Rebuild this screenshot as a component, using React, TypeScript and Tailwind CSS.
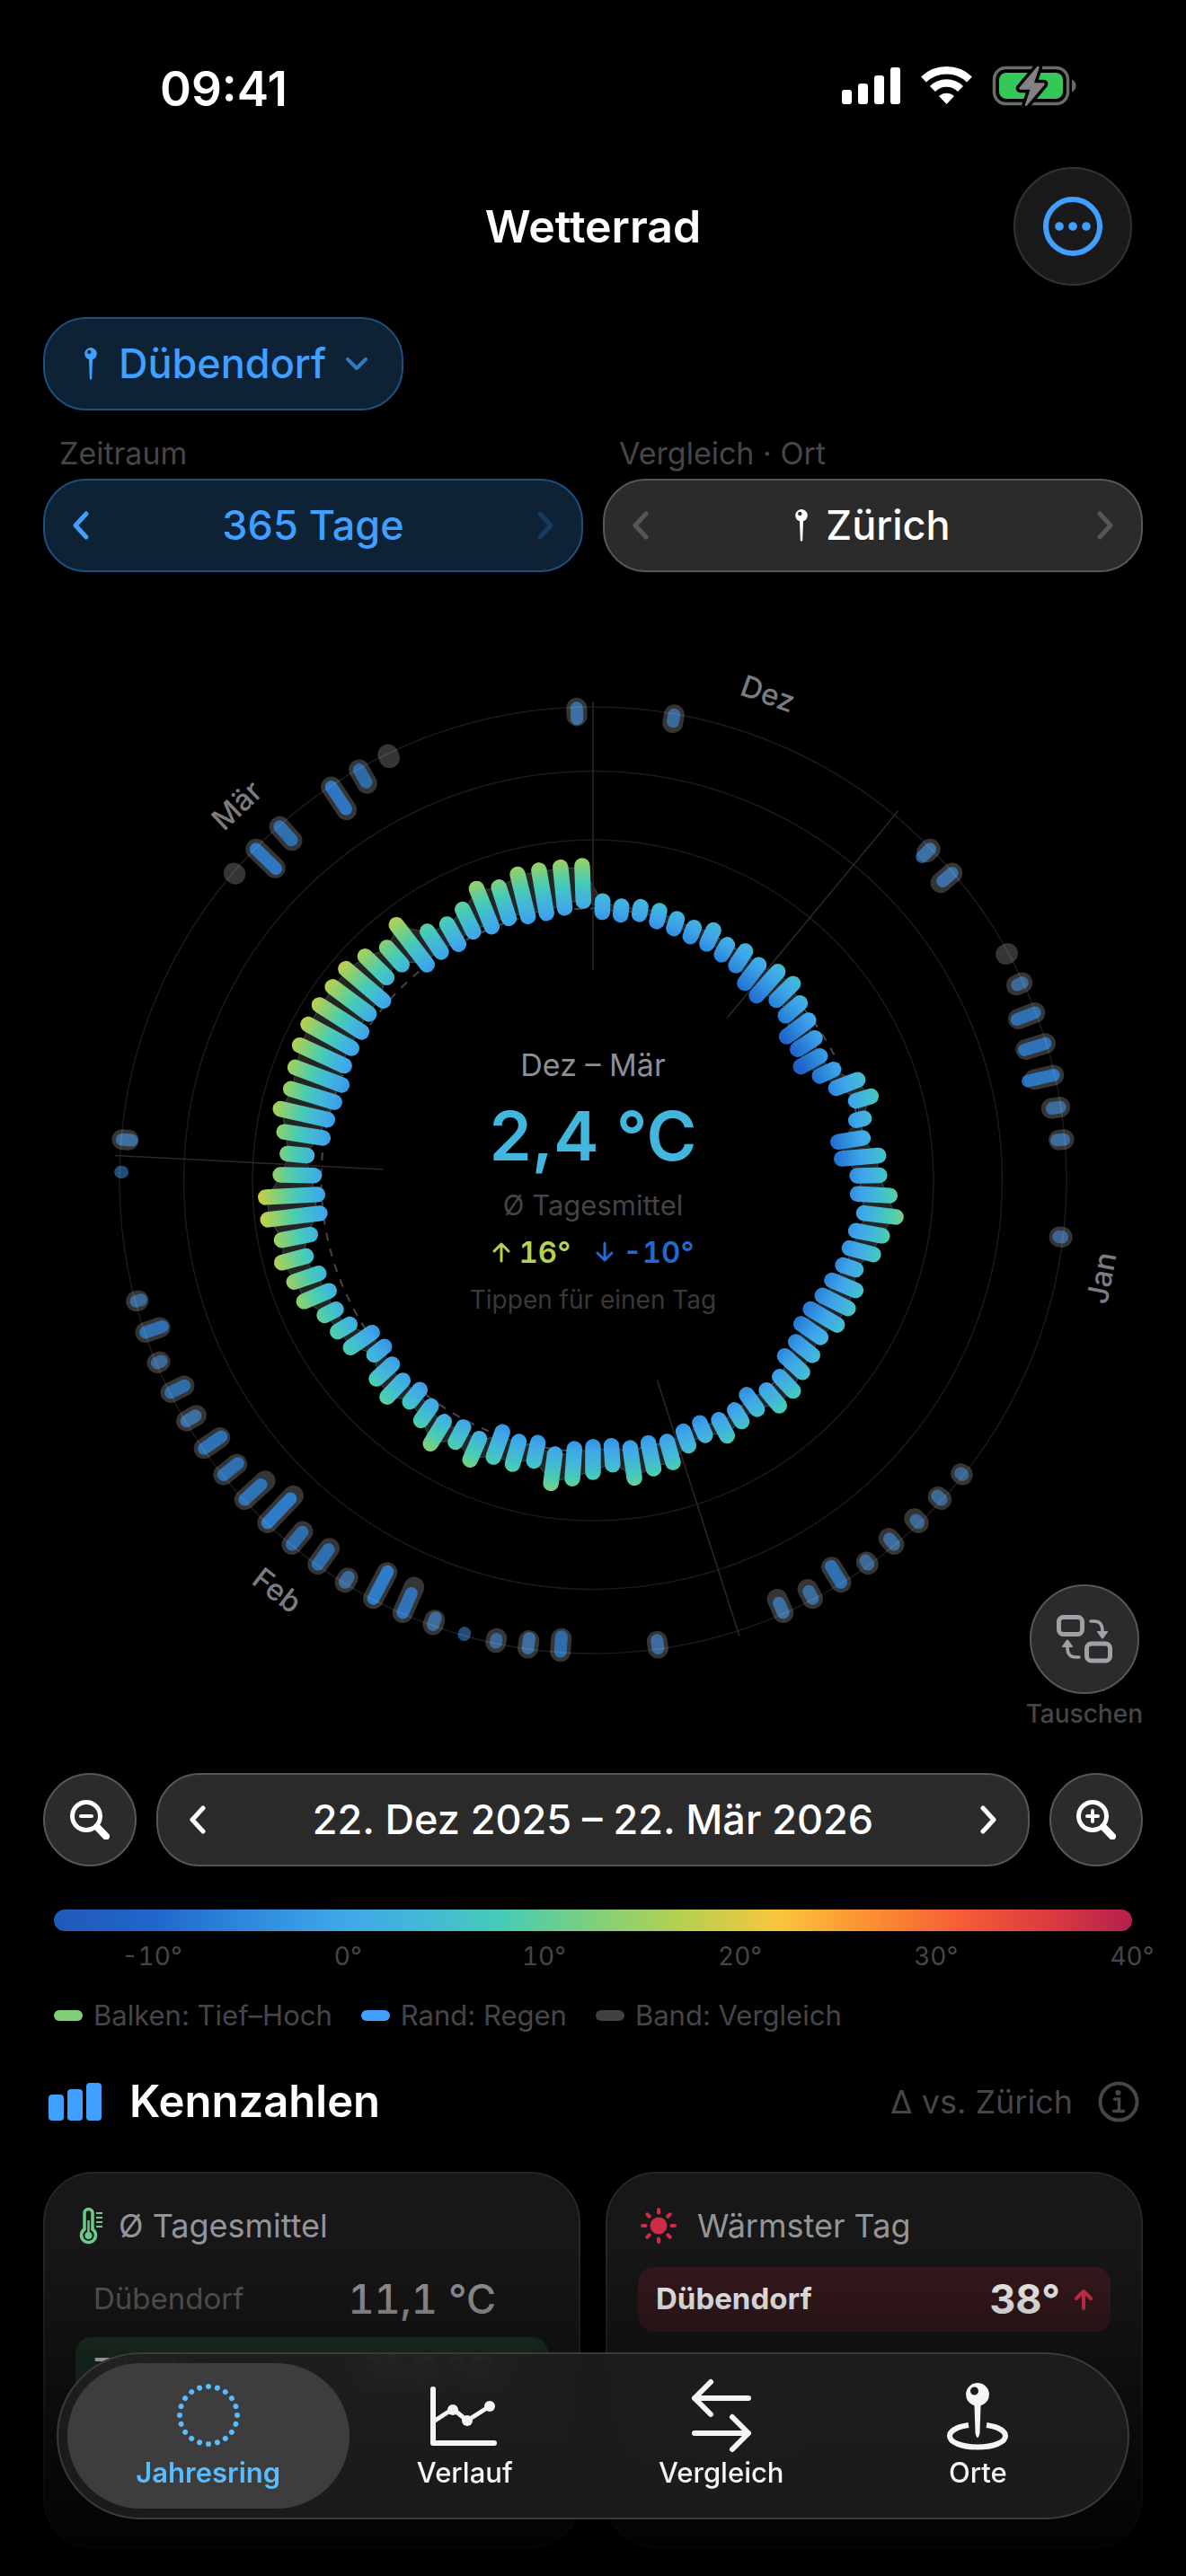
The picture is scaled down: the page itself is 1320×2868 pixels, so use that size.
import clsx from "clsx";
import type { ReactNode } from "react";

const DAYS = 91;
const ZERO_RADIUS = 302.5;
const PX_PER_DEGREE = 3.82;
const RIM = 526;

// [low, high] of every day, starting on 22 December
const TEMPS: [number, number][] = [
  [-1, 2.2], [-1.4, 1.1], [-0.5, 1.7], [-1.5, 1.7], [-2.1, 0.8], [-2.7, 0.1], [-2.7, 1.7],
  [-3.5, -0.2], [-4, 1], [-6.7, 0], [-7.3, 2], [-4.3, 2.5], [-5.4, 0.2], [-8.9, -1],
  [-8.4, -2.4], [-10.2, -3.8], [-6.5, -2.1], [-3.5, 3.3], [0.8, 5.4], [-0.6, 1.8], [-6.9, 0.4],
  [-6.5, 4.3], [-2.2, 4.3], [-2, 7.4], [0.3, 9.7], [-1.2, 6.6], [-1.9, 5.3], [-2.3, 1.7],
  [-3.7, 3.8], [-4.4, 4], [-5.5, 3.5], [-5.5, 1.4], [-3.6, 2.6], [-3.4, 3.6], [-0.2, 5.5],
  [0.2, 6], [-2.3, 2.9], [-0.5, 3.4], [-0.3, 4.9], [-1.9, 2], [-1.4, 3], [0, 6.3],
  [-0.9, 6.7], [-0.4, 8.4], [-1.6, 3.9], [-1.5, 5.9], [-0.7, 8], [1.4, 10], [-1, 4.4],
  [0, 6.8], [-1.2, 6.5], [3.1, 9.8], [2.1, 7], [3.5, 11], [1.8, 6.9], [0, 4.6],
  [1.3, 7.9], [0.2, 6.4], [-1.4, 2.4], [-1, 6.6], [3.2, 7.3], [4.6, 8.4], [4.2, 12.1],
  [5.2, 12.8], [7.3, 14.6], [4.7, 13.2], [1, 16.2], [1.2, 16.3], [2.1, 11.9], [4.5, 10.2],
  [0.5, 11.9], [0.2, 14.2], [-0.5, 12.8], [-0.9, 13.6], [0.6, 14.9], [1, 15.4], [0.9, 15.5],
  [2.1, 15.3], [1.2, 15.6], [5.1, 13.9], [4.8, 11.4], [0.1, 14.7], [0.7, 7.9], [0, 6.7],
  [1.2, 8.4], [0.4, 12.3], [1, 10.5], [0, 12.6], [-0.2, 12.5], [0.6, 12.5], [2.2, 12.5],
];

// [day, length for Zürich, length for Dübendorf], 0 means dry
const RAIN: [number, number, number][] = [
  [2, 9, 7.5], [11, 5, 12.5], [12, 16.5, 13.7], [15, 2, 0], [16, 7, 6], [17, 19.7, 21.4],
  [18, 22.7, 24.4], [19, 22, 29.6], [20, 9.5, 9], [21, 5.5, 8], [24, 3, 3.7], [32, 2, 2.6],
  [33, 4.7, 6], [34, 6.4, 4], [35, 9, 8], [36, 3.3, 5], [37, 20, 21], [38, 11.6, 9],
  [39, 16.3, 11.8], [43, 7.8, 8.8], [46, 14.5, 16.6], [47, 8.5, 11], [48, 4.6, 3.7],
  [49, 0, 2], [50, 5.6, 8.3], [51, 31, 23.6], [52, 32.8, 34], [53, 6, 7], [54, 22, 20.4],
  [55, 18.8, 18], [56, 41.6, 37], [57, 30.8, 24.6], [58, 19, 20.5], [59, 21.5, 23.3],
  [60, 12.7, 11.5], [61, 16.6, 17], [62, 3.3, 5], [63, 17, 20], [64, 2.5, 5.5], [68, 0, 2],
  [69, 7, 10.6], [78, 2, 0], [79, 30, 31], [80, 20.8, 20], [82, 30.7, 29.5], [83, 17.5, 16],
  [84, 4, 0], [90, 8.6, 12],
];

const MONTHS = [
  { name: "Dez", start: 0, middle: 5, flip: false },
  { name: "Jan", start: 10, middle: 25.5, flip: true },
  { name: "Feb", start: 41, middle: 55, flip: true },
  { name: "Mär", start: 69, middle: 80, flip: false },
];

const SCALE: [number, string][] = [
  [-15, "#2159b8"], [-10, "#1f66cc"], [-5, "#2e8adc"], [-0.5, "#3fa6ea"], [4, "#42b9d6"],
  [8, "#47ccb5"], [12.7, "#82cf7a"], [17.2, "#b8d050"], [22, "#fac53c"], [26.6, "#fc9030"],
  [31, "#f65f35"], [36, "#da3940"], [40, "#b3204f"],
];

const radius = (t: number) => ZERO_RADIUS + t * PX_PER_DEGREE;
const dayAngle = (day: number) => ((day + 0.5) / DAYS) * 360;

function polar(r: number, deg: number) {
  const a = (deg * Math.PI) / 180;
  return `${(r * Math.sin(a)).toFixed(1)},${(-r * Math.cos(a)).toFixed(1)}`;
}

function bandPath() {
  const outer = TEMPS.map(([, high], i) => polar(radius(high - 0.4), dayAngle(i)));
  const inner = TEMPS.map(([low], i) => polar(radius(low + 0.8), dayAngle(i)));
  return `M${outer.join("L")}ZM${inner.join("L")}Z`;
}

function WeatherWheel() {
  const maxRadius = radius(40);

  return (
    <svg
      viewBox="-612 -612 1224 1224"
      className="col-start-1 row-start-1 w-full h-auto overflow-visible"
      role="img"
      aria-label="Wetterrad Dez – Mär"
    >
      <defs>
        <radialGradient id="temperature" gradientUnits="userSpaceOnUse" cx="0" cy="0" r={maxRadius}>
          {SCALE.map(([t, color]) => (
            <stop key={t} offset={radius(t) / maxRadius} stopColor={color} />
          ))}
        </radialGradient>
      </defs>

      {RAIN.map(([day, other, own]) => (
        <g key={day} transform={`rotate(${dayAngle(day)})`} strokeLinecap="round">
          {other > 0 && (
            <path d={`M0 ${-RIM}v${other}`} stroke="#353535" strokeWidth="23" />
          )}
          {own > 0 && (
            <path
              d={`M0 ${-RIM}v${own}`}
              stroke={own > 15 ? "#2d8be8" : "#4397ec"}
              strokeWidth="14"
              opacity={0.48 + Math.min(own, 34) * 0.01}
            />
          )}
        </g>
      ))}

      <g fill="none" stroke="#fff" strokeOpacity="0.1" strokeWidth="1.5">
        <circle r="379" />
        <circle r="455.5" />
        <circle r="527" />
      </g>
      <circle
        r={ZERO_RADIUS}
        fill="none"
        stroke="#464646"
        strokeWidth="2"
        strokeDasharray="9 9"
      />
      <path d={bandPath()} fill="#242424" fillRule="evenodd" stroke="#484848" strokeWidth="1" />

      {MONTHS.map(({ name, start }) => (
        <path
          key={name}
          d="M0 -234V-533"
          transform={`rotate(${(start / DAYS) * 360})`}
          stroke="#2a2a2a"
          strokeWidth="1.5"
        />
      ))}

      {TEMPS.map(([low, high], i) => (
        <path
          key={i}
          d={`M0.01 ${-radius(low)}L0 ${-radius(high)}`}
          transform={`rotate(${dayAngle(i)})`}
          stroke="url(#temperature)"
          strokeWidth="17.5"
          strokeLinecap="round"
        />
      ))}

      {MONTHS.map(({ name, middle, flip }) => {
        const angle = (middle / DAYS) * 360;
        const [x, y] = polar(576, angle).split(",");
        return (
          <text
            key={name}
            transform={`translate(${x} ${y}) rotate(${flip ? angle - 180 : angle})`}
            textAnchor="middle"
            dominantBaseline="central"
            fontSize="33"
            fontWeight="500"
            fill="#7c7c80"
          >
            {name}
          </text>
        );
      })}
    </svg>
  );
}

function StatusIcons() {
  return (
    <svg viewBox="0 0 262 46" className="w-[262px] h-[46px]" aria-hidden="true">
      <g fill="#fff">
        <rect x="0" y="28" width="11" height="16" rx="3" />
        <rect x="18" y="21" width="11" height="23" rx="3" />
        <rect x="36" y="12" width="11" height="32" rx="3" />
        <rect x="54" y="3" width="11" height="41" rx="3" />
      </g>
      <g fill="none" stroke="#fff" strokeWidth="8.5">
        <path d="M91 16.5a37 37 0 0 1 51 0" />
        <path d="M101 27a22 22 0 0 1 31 0" />
      </g>
      <path d="M116.500 44l-8.500-9a12.500 12.500 0 0 1 17 0z" fill="#fff" />
      <rect x="169.500" y="3.500" width="82" height="40" rx="13" fill="none" stroke="#6b6b6b" strokeWidth="3.500" />
      <rect x="175" y="9" width="71" height="29" rx="8" fill="#34c759" />
      <path d="M256 16.500c6 2.500 6 11.500 0 14z" fill="#6b6b6b" />
      <path
        d="M217 2.500l-19.500 23c-.8 1 0 2.200 1 2.200h11l-5.500 16.500c-.6 1.800 1 2.500 2 1.300l19.500-23c.8-1 .2-2.300-1-2.300h-10.500l5.500-16.500c.5-1.800-1.500-2.500-2.500-1.200z"
        fill="#828282"
        stroke="#000"
        strokeWidth="7"
        strokeLinejoin="round"
        paintOrder="stroke"
      />
    </svg>
  );
}

function PinIcon() {
  return (
    <svg viewBox="0 0 14 36" className="w-3.5 h-9 fill-current" aria-hidden="true">
      <path
        fillRule="evenodd"
        d="M7 0a6.800 6.800 0 0 1 2 13.300L8.200 34.500Q7 37 5.800 34.500L5 13.300A6.800 6.800 0 0 1 7 0zM5.300 2.700a2.200 2.200 0 1 0 0 4.400a2.200 2.200 0 0 0 0-4.400z"
      />
    </svg>
  );
}

function Chevron({ to, className }: { to: "left" | "right" | "down"; className?: string }) {
  const paths = {
    left: "M22 5 10 18 22 31",
    right: "M14 5 26 18 14 31",
    down: "M8 13 18 23 28 13",
  };
  return (
    <svg
      viewBox="0 0 36 36"
      className={clsx("size-9 fill-none stroke-current", className)}
      strokeWidth={to === "down" ? 4 : 5}
      strokeLinecap="round"
      strokeLinejoin="round"
      aria-hidden="true"
    >
      <path d={paths[to]} />
    </svg>
  );
}

function ZoomIcon({ plus }: { plus?: boolean }) {
  return (
    <svg viewBox="0 0 44 44" className="size-11 fill-none stroke-white" strokeLinecap="round" aria-hidden="true">
      <circle cx="18" cy="18" r="15.500" strokeWidth="5" />
      <path d="M30 30 40 40.500" strokeWidth="8" />
      <path d={plus ? "M12 18h12M18 12v12" : "M12 18h12"} strokeWidth="4" />
    </svg>
  );
}

function SwapIcon() {
  return (
    <svg viewBox="0 0 62 54" className="w-[62px] h-[54px]" aria-hidden="true">
      <g fill="none" stroke="#a1a0a8" strokeLinecap="round">
        <rect x="2.500" y="2.500" width="26" height="19" rx="5" strokeWidth="5" />
        <rect x="33.500" y="32" width="26" height="19" rx="5" strokeWidth="5" />
        <path d="M38 7h4q9 0 9 11" strokeWidth="3.500" />
        <path d="M25 47h-4q-9 0-9-11" strokeWidth="3.500" />
      </g>
      <path d="M45.500 18h11q1 0 .5 1l-5 7q-1 1-2 0l-5-7q-.5-1 .5-1zM6.500 36h11q1 0 .5-1l-5-7q-1-1-2 0l-5 7q-.5 1 .5 1z" fill="#a1a0a8" />
    </svg>
  );
}

function ArrowIcon({ down, className }: { down?: boolean; className?: string }) {
  return (
    <svg
      viewBox="0 0 20 24"
      className={clsx("w-5 h-6 fill-none stroke-current", className)}
      strokeLinecap="round"
      strokeLinejoin="round"
      aria-hidden="true"
    >
      <path d={down ? "M10 2v19M2 13l8 8 8-8" : "M10 22V3M2 11l8-8 8 8"} />
    </svg>
  );
}

function Card({ icon, title, children }: { icon: ReactNode; title: string; children: ReactNode }) {
  return (
    <article className="flex-1 h-[420px] rounded-[56px] border-2 border-[#262626] bg-[#171717] px-[34px] pt-9">
      <h3 className="flex items-center h-11 text-[36px] text-[#949499]">
        {icon}
        {title}
      </h3>
      {children}
    </article>
  );
}

const TABS = [
  {
    label: "Jahresring",
    icon: (
      <g fill="currentColor">
        {Array.from({ length: 20 }, (_, i) => (
          <circle key={i} cx="40" cy="8" r="3" transform={`rotate(${i * 18} 40 40)`} />
        ))}
      </g>
    ),
  },
  {
    label: "Verlauf",
    icon: (
      <g fill="none" stroke="currentColor" strokeWidth="6" strokeLinecap="round" strokeLinejoin="round">
        <path d="M5 11v60h68" />
        <path d="M7 46l20-13 16 13 25-16" strokeWidth="5" />
        <g fill="currentColor" stroke="none">
          <circle cx="27" cy="34" r="6" />
          <circle cx="43" cy="46" r="6" />
          <circle cx="68" cy="30" r="6" />
        </g>
      </g>
    ),
  },
  {
    label: "Vergleich",
    icon: (
      <g fill="none" stroke="currentColor" strokeWidth="6" strokeLinecap="round" strokeLinejoin="round">
        <path d="M70 21H10M28 3 10 21 28 39" />
        <path d="M10 60h60M52 42l18 18-18 18" />
      </g>
    ),
  },
  {
    label: "Orte",
    icon: (
      <g>
        <path
          d="M30 51C16 53 9 58 9 63c0 7 13 12.500 31 12.500S71 70 71 63c0-5-7-10-21-12"
          fill="none"
          stroke="currentColor"
          strokeWidth="6"
        />
        <path
          fill="currentColor"
          fillRule="evenodd"
          d="M40 4a13 13 0 0 1 3.500 25.500L42.500 60Q40 70 37.500 60L36.500 29.500A13 13 0 0 1 40 4zM36.500 8.500a4.500 4.500 0 1 0 0 9a4.500 4.500 0 0 0 0-9z"
        />
      </g>
    ),
  },
];

export default function App() {
  const gradient = SCALE.map(([t, color]) => `${color} ${((t + 15) / 55) * 100}%`).join(", ");

  return (
    <main className="relative min-h-screen overflow-hidden bg-black text-white font-['Inter','Liberation_Sans',sans-serif]">
      <div className="flex items-center justify-between h-[186px] pl-[178px] pr-[121px] pt-1">
        <span className="text-[53px] leading-none font-semibold mt-2">09:41</span>
        <StatusIcons />
      </div>

      <header className="grid grid-cols-[1fr_auto_1fr] items-center px-15">
        <h1 className="col-start-2 text-[50px] font-semibold">Wetterrad</h1>
        <button
          aria-label="Mehr"
          className="justify-self-end grid place-items-center size-33 rounded-full bg-[#1a1a1a] border-2 border-[#333]"
        >
          <svg viewBox="0 0 66 66" className="size-[66px] fill-[#409fff]" aria-hidden="true">
            <circle cx="33" cy="33" r="30" fill="none" stroke="#409fff" strokeWidth="6" />
            <circle cx="18" cy="33" r="4.800" />
            <circle cx="33" cy="33" r="4.800" />
            <circle cx="48" cy="33" r="4.800" />
          </svg>
        </button>
      </header>

      <section className="px-12 pt-[35px]">
        <button className="flex items-center h-26 rounded-[48px] border-2 border-[#1d4f7f] bg-[#0d2235] pl-11 pr-8 text-[#409fff] text-[45px] font-medium">
          <PinIcon />
          <span className="ml-6">Dübendorf</span>
          <Chevron to="down" className="ml-4 opacity-70" />
        </button>

        <div className="grid grid-cols-2 gap-x-[22px] mt-7 text-[34px] leading-10 text-[#464649]">
          <span className="pl-[18px]">Zeitraum</span>
          <span className="pl-[18px]">Vergleich · Ort</span>
        </div>
        <div className="grid grid-cols-2 gap-[22px] mt-2 text-[45px] font-medium">
          <div className="flex items-center justify-between h-26 px-6 rounded-[48px] border-2 border-[#1d4f7f] bg-[#0d2235] text-[#409fff]">
            <button aria-label="Kürzer">
              <Chevron to="left" />
            </button>
            <span>365 Tage</span>
            <button aria-label="Länger" disabled className="opacity-20">
              <Chevron to="right" />
            </button>
          </div>
          <div className="flex items-center justify-between h-26 px-6 rounded-[48px] border-2 border-[#575757] bg-[#2b2b2b]">
            <button aria-label="Voriger Ort" className="opacity-20">
              <Chevron to="left" />
            </button>
            <span className="flex items-center gap-5">
              <PinIcon />
              Zürich
            </span>
            <button aria-label="Nächster Ort" className="opacity-20">
              <Chevron to="right" />
            </button>
          </div>
        </div>
      </section>

      <section className="relative grid place-items-center px-12 pt-[65px]">
        <WeatherWheel />
        <div className="col-start-1 row-start-1 flex flex-col items-center pt-1.5 text-center">
          <p className="text-[34px] leading-[44px] text-[#8e8e93]">Dez – Mär</p>
          <p className="text-[76px] leading-[112px] font-semibold text-[#42b6dc]">2,4 °C</p>
          <p className="text-[31px] leading-[44px] text-[#444446]">Ø Tagesmittel</p>
          <p className="flex items-center gap-7 text-[33px] leading-[60px] font-semibold tabular-nums">
            <span className="flex items-center gap-2.5 text-[#b8d050]">
              <ArrowIcon className="stroke-3" />
              16°
            </span>
            <span className="flex items-center gap-2.5 text-[#2469cf]">
              <ArrowIcon down className="stroke-3" />
              -10°
            </span>
          </p>
          <p className="text-[28px] leading-[46px] text-[#39393b]">Tippen für einen Tag</p>
        </div>
        <div className="absolute right-12 bottom-0 flex flex-col items-center">
          <button
            id="swap"
            aria-label="Tauschen"
            className="grid place-items-center size-[122px] rounded-full border-2 border-[#575757] bg-[#2b2b2b]"
          >
            <SwapIcon />
          </button>
          <label htmlFor="swap" className="mt-1 text-[28px] leading-9 font-medium text-[#464649]">
            Tauschen
          </label>
        </div>
      </section>

      <section className="px-12 pt-12">
        <div className="flex gap-[22px]">
          <button aria-label="Verkleinern" className="grid place-items-center size-26 rounded-full border-2 border-[#575757] bg-[#2b2b2b]">
            <ZoomIcon />
          </button>
          <div className="flex flex-1 items-center justify-between px-7 rounded-[48px] border-2 border-[#575757] bg-[#2b2b2b] text-[45px] font-medium">
            <button aria-label="Früher">
              <Chevron to="left" />
            </button>
            <span>22. Dez 2025 – 22. Mär 2026</span>
            <button aria-label="Später">
              <Chevron to="right" />
            </button>
          </div>
          <button aria-label="Vergrössern" className="grid place-items-center size-26 rounded-full border-2 border-[#575757] bg-[#2b2b2b]">
            <ZoomIcon plus />
          </button>
        </div>

        <div className="px-3 mt-12">
          <div className="h-6 rounded-xl" style={{ background: `linear-gradient(to right, ${gradient})` }} />
          <div className="grid grid-cols-6 -mr-[109px] mt-2.5 text-center text-[28px] leading-9 text-[#464649] tabular-nums">
            {["-10°", "0°", "10°", "20°", "30°", "40°"].map((label) => (
              <span key={label}>{label}</span>
            ))}
          </div>
          <ul className="flex gap-8 mt-7 text-[31px] leading-10 text-[#464649]">
            <li className="flex items-center gap-3">
              <i className="w-8 h-3 rounded-full bg-[#82cf7a]" />
              Balken: Tief–Hoch
            </li>
            <li className="flex items-center gap-3">
              <i className="w-8 h-3 rounded-full bg-[#409fff]" />
              Rand: Regen
            </li>
            <li className="flex items-center gap-3">
              <i className="w-8 h-3 rounded-full bg-[#414144]" />
              Band: Vergleich
            </li>
          </ul>
        </div>
      </section>

      <section className="px-12 pt-11 pb-7">
        <div className="flex items-center h-16 pl-1.5 pr-1">
          <svg viewBox="0 0 60 44" className="w-15 h-11 fill-[#409fff]" aria-hidden="true">
            <rect x="0" y="14" width="17" height="29" rx="4" />
            <rect x="21" y="8" width="17" height="35" rx="4" />
            <rect x="42" y="1" width="17" height="42" rx="4" />
          </svg>
          <h2 className="ml-[30px] text-[49px] font-semibold">Kennzahlen</h2>
          <span className="ml-auto text-[36px] text-[#464649]">Δ vs. Zürich</span>
          <button aria-label="Info" className="ml-7 text-[#464649]">
            <svg viewBox="0 0 46 46" className="size-[46px] fill-none stroke-current" strokeWidth="4" aria-hidden="true">
              <circle cx="23" cy="23" r="20.500" />
              <circle cx="22.500" cy="13" r="3" className="fill-current stroke-none" />
              <path d="M18.500 20h5v13M17.500 33.500h11" strokeWidth="3.500" strokeLinecap="round" />
            </svg>
          </button>
        </div>

        <div className="relative flex gap-[28px] mt-[46px]">
          <Card
            title="Ø Tagesmittel"
            icon={
              <svg viewBox="0 0 26 42" className="w-[26px] h-[42px] ml-1 mr-[18px]" aria-hidden="true">
                <path
                  d="M6 25V7a4.500 4.500 0 0 1 9 0v18a8 8 0 1 1-9 0z"
                  fill="none"
                  stroke="#6acb8b"
                  strokeWidth="3.500"
                />
                <path d="M10.500 16v16" stroke="#6acb8b" strokeWidth="2.500" strokeLinecap="round" />
                <circle cx="10.500" cy="32" r="4" fill="#6acb8b" />
                <path d="M19 7h7M19 12h7M19 17h7M19 22h7" stroke="#6acb8b" strokeWidth="2" />
              </svg>
            }
          >
            <div className="flex items-center justify-between h-18 mt-6 px-5 text-[33px] text-[#5a5a5c]">
              Dübendorf
              <span className="mr-[38px] text-[45px] font-medium tabular-nums text-[#9c9ca1]">11,1 °C</span>
            </div>
            <div className="flex items-center justify-between h-18 mt-1.5 px-5 rounded-[18px] bg-[#1f3327] text-[33px] font-bold text-[#ddd]">
              Zürich
              <span className="mr-[38px] text-[45px]">11,0 °C</span>
            </div>
          </Card>
          <Card
            title="Wärmster Tag"
            icon={
              <svg viewBox="0 0 42 42" className="size-[42px] ml-0.5 mr-[22px]" aria-hidden="true">
                <circle cx="21" cy="21" r="9.500" fill="#cd2c49" />
                {Array.from({ length: 8 }, (_, i) => (
                  <path
                    key={i}
                    d="M21 3v3.500"
                    transform={`rotate(${i * 45} 21 21)`}
                    stroke="#cd2c49"
                    strokeWidth="4"
                    strokeLinecap="round"
                  />
                ))}
              </svg>
            }
          >
            <div className="flex items-center h-18 mt-6 px-5 rounded-[18px] bg-[#36191d] text-[33px] font-bold">
              Dübendorf
              <span className="ml-auto text-[45px]">38°</span>
              <ArrowIcon className="ml-4 stroke-4 text-[#dc304e]" />
            </div>
            <div className="flex items-center h-18 mt-1.5 px-5 text-[33px] text-[#4c4c4e]">
              Zürich
              <span className="ml-auto mr-9 text-[45px]">37°</span>
            </div>
            <p className="mt-3 text-[36px] font-semibold text-[#c4442f]">Δ +0,6 °C</p>
          </Card>
          <div className="absolute -inset-x-1 -bottom-7 top-20 bg-linear-to-b from-black/0 via-black/50 via-50% to-black/95" />
        </div>
      </section>

      <nav className="absolute inset-x-[63px] bottom-[63px] grid grid-cols-4 h-[186px] px-6 py-2.5 rounded-full border-2 border-[#3a3a3a] bg-[#1e1e1e]/90 backdrop-blur-md">
        {TABS.map(({ label, icon }, i) => (
          <button
            key={label}
            className={clsx(
              "flex flex-col items-center pt-[18px] rounded-full text-[31px] leading-10",
              i === 0 ? "-mx-3.5 bg-[#3d3d3d] font-semibold text-[#58bdff]" : "font-medium text-[#f5f5f5]",
            )}
          >
            <svg viewBox="0 0 80 80" className="size-20 overflow-visible" aria-hidden="true">
              {icon}
            </svg>
            <span className="mt-1">{label}</span>
          </button>
        ))}
      </nav>
    </main>
  );
}
